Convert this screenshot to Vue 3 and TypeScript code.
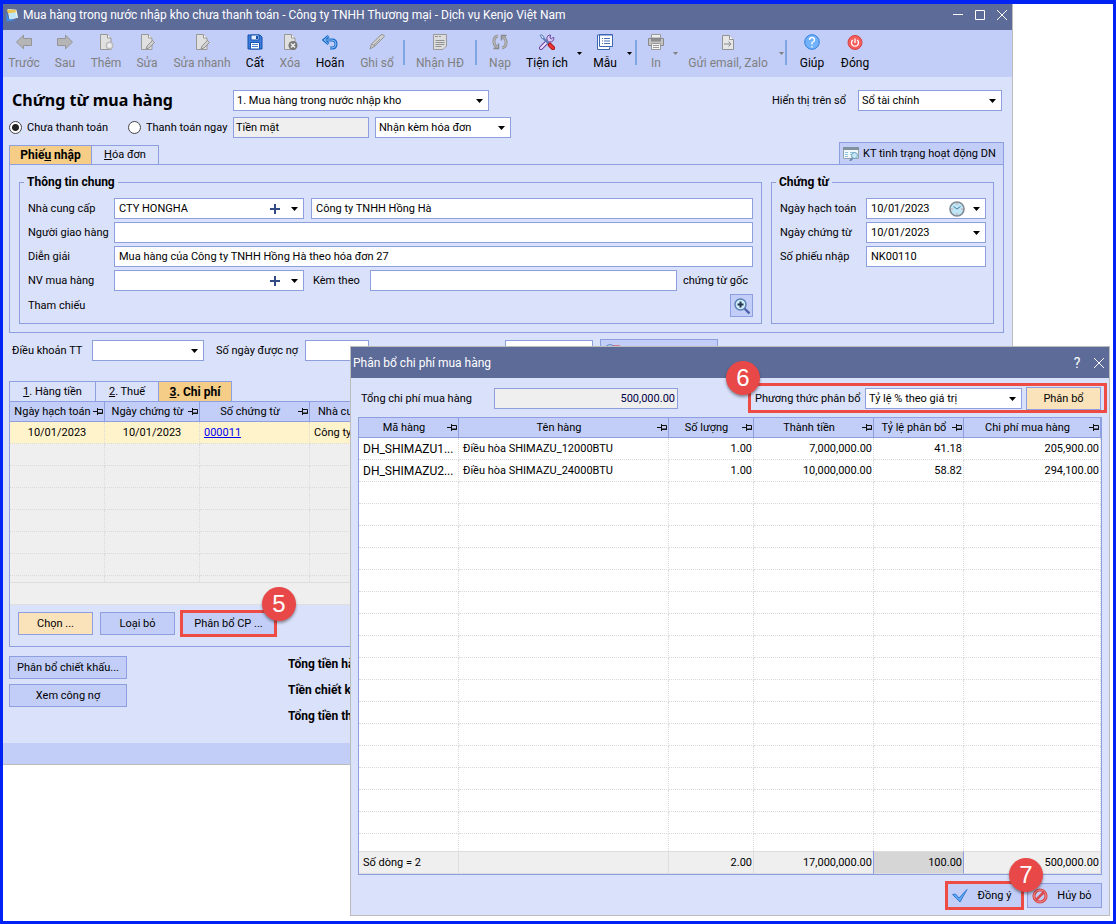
<script setup lang="ts">
import { ref } from 'vue'

interface Tool {
  kind: 'button' | 'arrow' | 'sep'
  width: number
  label?: string
  icon?: string
  off?: boolean
}

const tools: Tool[] = [
  { kind: 'button', label: 'Trước', icon: 'back', width: 42, off: true },
  { kind: 'button', label: 'Sau', icon: 'next', width: 40, off: true },
  { kind: 'button', label: 'Thêm', icon: 'add', width: 42, off: true },
  { kind: 'button', label: 'Sửa', icon: 'edit', width: 40, off: true },
  { kind: 'button', label: 'Sửa nhanh', icon: 'edit', width: 70, off: true },
  { kind: 'button', label: 'Cất', icon: 'save', width: 36 },
  { kind: 'button', label: 'Xóa', icon: 'delete', width: 34, off: true },
  { kind: 'button', label: 'Hoãn', icon: 'undo', width: 46 },
  { kind: 'button', label: 'Ghi sổ', icon: 'pen', width: 48, off: true },
  { kind: 'sep', width: 6 },
  { kind: 'button', label: 'Nhận HĐ', icon: 'invoice', width: 66, off: true },
  { kind: 'sep', width: 6 },
  { kind: 'button', label: 'Nạp', icon: 'reload', width: 42, off: true },
  { kind: 'button', label: 'Tiện ích', icon: 'tools', width: 52 },
  { kind: 'arrow', label: 'Mở Tiện ích', width: 12 },
  { kind: 'button', label: 'Mẫu', icon: 'template', width: 40 },
  { kind: 'arrow', label: 'Mở Mẫu', width: 8 },
  { kind: 'sep', width: 6 },
  { kind: 'button', label: 'In', icon: 'print', width: 34, off: true },
  { kind: 'arrow', label: 'Mở In', width: 4, off: true },
  { kind: 'button', label: 'Gửi email, Zalo', icon: 'send', width: 102, off: true },
  { kind: 'arrow', label: 'Mở Gửi email', width: 4, off: true },
  { kind: 'sep', width: 6 },
  { kind: 'button', label: 'Giúp', icon: 'help', width: 46 },
  { kind: 'button', label: 'Đóng', icon: 'power', width: 40 },
]

const payment = ref('unpaid')

const columns = ['Mã hàng', 'Tên hàng', 'Số lượng', 'Thành tiền', 'Tỷ lệ phân bổ', 'Chi phí mua hàng']
const items = [
  ['DH_SHIMAZU1...', 'Điều hòa SHIMAZU_12000BTU', '1.00', '7,000,000.00', '41.18', '205,900.00'],
  ['DH_SHIMAZU2...', 'Điều hòa SHIMAZU_24000BTU', '1.00', '10,000,000.00', '58.82', '294,100.00'],
]
const totals = ['Số dòng = 2', '', '2.00', '17,000,000.00', '100.00', '500,000.00']
</script>

<template>
  <div class="desktop">
    <svg class="defs" aria-hidden="true">
      <symbol id="back" viewBox="0 0 16 16"><path d="M.5 8 7.500 1.200v3.300h8v7h-8v3.300z" fill="#b5b5b5" stroke="#959595" /></symbol>
      <symbol id="next" viewBox="0 0 16 16"><path d="M15.500 8 8.500 1.200v3.300h-8v7h8v3.300z" fill="#b5b5b5" stroke="#959595" /></symbol>
      <symbol id="doc" viewBox="0 0 16 16"><path d="M2.500.5h7l3.500 3.500v11.500H2.500z" fill="#e0e0e0" stroke="#999" /><path d="M9.500.5V4H13" fill="#fff" stroke="#999" /></symbol>
      <symbol id="add" viewBox="0 0 16 16"><use href="#doc" /><circle cx="11.500" cy="11.500" r="3.500" fill="#ddd" stroke="#b0b0b0" /><circle cx="11.500" cy="11.500" r="1.500" fill="#f4f4f4" /></symbol>
      <symbol id="edit" viewBox="0 0 16 16"><use href="#doc" /><path d="m7 15 1-3 5.500-5.500 2 2L10 14z" fill="#d0d0d0" stroke="#929292" /></symbol>
      <symbol id="save" viewBox="0 0 16 16"><path d="M1 1h12l2 2v12H1z" fill="#3b7ddd" stroke="#1551ad" /><path d="M4 1h8v5H4z" fill="#e8f1fd" stroke="#1551ad" /><path d="M9 2h2v3H9z" fill="#1551ad" /><path d="M3.500 8.500h9V15h-9z" fill="#fff" stroke="#1551ad" /><path d="M5 10.500h6M5 12.500h6" stroke="#4a83cf" /></symbol>
      <symbol id="delete" viewBox="0 0 16 16"><use href="#doc" /><circle cx="11" cy="11.500" r="4.500" fill="#777" /><path d="m9 9.500 4 4m0-4-4 4" stroke="#eee" stroke-width="1.500" /></symbol>
      <symbol id="undo" viewBox="0 0 16 16"><path d="M6.500 2 2 6l4.500 4M2.500 6H10q4 0 4 4t-4 4H8" fill="none" stroke="#176ccb" stroke-width="3" /><path d="M6.500 2 2 6l4.500 4M3 6h7q4 0 4 4t-4 4H8" fill="none" stroke="#8dbcf2" /></symbol>
      <symbol id="pen" viewBox="0 0 16 16"><path d="m1 15 1.500-5L12 .8q2.500-1 3.500 1.500L6 12z" fill="#d0d0d0" stroke="#929292" /><path d="m2.500 10 3.500 2M5 11l6-6" stroke="#999" /></symbol>
      <symbol id="invoice" viewBox="0 0 16 16"><path d="M1.500.5h13V12l-3.500 3.500H1.500z" fill="#ddd" stroke="#999" /><path d="M3 2.500h3m1 0h2M3.500 6.500h9M3.500 8.500h9M3.500 10.500h9M3.500 12.500h6" stroke="#929292" /></symbol>
      <symbol id="reload" viewBox="0 0 16 16"><path d="M6 2Q1.500 3 2 8q0 3 3 5.500M10 14q4.500-1 4-6 0-3-3-5.500" fill="none" stroke="#969696" stroke-width="3" /><path d="M6 2Q1.500 3 2 8q0 3 3 5.500M10 14q4.500-1 4-6 0-3-3-5.500" fill="none" stroke="#c2c2c2" /><path d="M1.500 14.500h5v-5M14.500 1.500h-5v5" fill="none" stroke="#888" stroke-width="1.500" /></symbol>
      <symbol id="tools" viewBox="0 0 16 16"><path d="m2 14 8-8" stroke="#6d43a0" stroke-width="4" stroke-linecap="round" /><path d="m2 14 8-8" stroke="#efe4fb" stroke-width="2" stroke-linecap="round" /><path d="M14.500 3a3.500 3.500 0 1 1-3-2L11 4l1.500 1z" fill="#d9cbf1" stroke="#6d43a0" /><path d="m3 3 7 7" stroke="#5a7db8" stroke-width="2" /><path d="M1 1.500 3 .7l2 2.800L3.500 5z" fill="#cfe0f5" stroke="#5a7db8" /><path d="m11 11 3 3" stroke="#a51919" stroke-width="4.500" stroke-linecap="round" /><path d="m11 11 3 3" stroke="#ee3535" stroke-width="2.500" stroke-linecap="round" /></symbol>
      <symbol id="template" viewBox="0 0 16 16"><path d="M.5 2.500v13h12v-2M13.500 1H.5v3" fill="#fff" stroke="#3a66b5" /><path d="M2.500.5h13v12h-13z" fill="#fff" stroke="#3a66b5" /><path d="M2.500 1h13" stroke="#3a66b5" /><path d="M5 4.500h1m1 0h6M5 7h1m1 0h6M5 9.500h1m1 0h6" stroke="#4a73bd" /></symbol>
      <symbol id="print" viewBox="0 0 16 16"><path d="M3.500.5h9V4h-9z" fill="#f0f0f0" stroke="#999" /><path d="M.5 4.500h15v7H.5z" fill="#c4c4c4" stroke="#8a8a8a" /><path d="M3 5h10v2.500H3z" fill="#8d8d8d" /><path d="M3.500 9.500h9v6h-9z" fill="#f4f4f4" stroke="#999" /><path d="M5 11.500h6m-6 2h6" stroke="#999" /></symbol>
      <symbol id="send" viewBox="0 0 16 16"><path d="M2.500 1.500h7l4 4v10h-11z" fill="#e6e6e6" stroke="#929292" /><path d="M9.500 1.500v4h4" fill="#fff" stroke="#929292" /><path d="M4 10h7M8.500 7.500 11 10l-2.500 2.500" fill="none" stroke="#888" /></symbol>
      <symbol id="help" viewBox="0 0 16 16"><circle cx="8" cy="8" r="7.300" fill="#72b2fa" stroke="#2e80df" /><path d="M5.500 6q0-2.500 2.500-2.500T10.500 6Q10.500 7.500 8 8.500v2M8 12v1.500" fill="none" stroke="#fff" stroke-width="1.300" /></symbol>
      <symbol id="power" viewBox="0 0 16 16"><circle cx="8" cy="8.500" r="7" fill="#f4605e" stroke="#d63f42" /><path d="M5.800 6a3.500 3.500 0 1 0 4.400 0M8 4.500V9" fill="none" stroke="#fff" stroke-width="1.300" /></symbol>
      <symbol id="notes" viewBox="0 0 16 16"><path d="m3 1 10 1 2 9-10 2z" fill="#f4f7e6" /><path d="m2 2 10 0 .5 3-9 1z" fill="#e8c454" /><path d="m1 4 3 8 8 2-10 1z" fill="#3c8df0" /><path d="m4 6 8-1 2 6-8 2z" fill="#bfe4f6" /></symbol>
      <symbol id="arrow" viewBox="0 0 7 4"><path d="M0 0h7L3.500 4z" fill="currentColor" /></symbol>
      <symbol id="plus" viewBox="0 0 10 10"><path d="M5 0v10M0 5h10" stroke="#324a86" stroke-width="2" /></symbol>
      <symbol id="pin" viewBox="0 0 10 7"><path d="M0 3.500h4M4.500 0v7M4.500 1.500h5v4h-5" fill="none" stroke="#111" /><path d="M5 5h5" stroke="#111" /></symbol>
      <symbol id="clock" viewBox="0 0 16 16"><circle cx="8" cy="8" r="7" fill="#bfe6f5" stroke="#7f8a94" stroke-width="1.600" /><path d="M8 8 4.500 5.500M8 8l3.500-2.500" stroke="#4779a6" /><path d="M7.500 2.500h1v1h-1zM7.500 12.500h1v1h-1zM2.500 7.500h1v1h-1zM12.500 7.500h1v1h-1z" fill="#e05a5a" /></symbol>
      <symbol id="zoom" viewBox="0 0 16 16"><path d="m10.500 10.500 5 5" stroke="#4c62ab" stroke-width="2.400" /><circle cx="6.500" cy="6.500" r="5.500" fill="#cfeefa" stroke="#5b7bb4" stroke-width="1.400" /><path d="M6.500 3.500v6M3.500 6.500h6" stroke="#26344f" stroke-width="2" /></symbol>
      <symbol id="lookup" viewBox="0 0 16 14"><path d="M.5.5h15v11H.5z" fill="#f1f8fa" stroke="#94a5ae" /><path d="M0 0h16v3H0z" fill="#80929d" /><path d="M2 5.500h3m-3 2h3m-3 2h3M7 5.500h5m-5 2h3" stroke="#8fc4dc" /><circle cx="11.500" cy="8.500" r="3" fill="#c4e6f5" stroke="#6f9fc0" /><path d="m9.500 11-2.500 3" stroke="#6f8ea8" stroke-width="2" /></symbol>
      <symbol id="report" viewBox="0 0 16 14"><circle cx="6" cy="6" r="5.300" fill="#cfeefa" stroke="#5b7bb4" /><path d="M9 2.500h7" stroke="#d33" stroke-width="2" /></symbol>
      <symbol id="ok" viewBox="0 0 16 16"><path d="m.5 6.500 3-.5 3.500 4 8-8.500L8 14z" fill="#5ea8f5" stroke="#3479cf" stroke-linejoin="round" /></symbol>
      <symbol id="deny" viewBox="0 0 16 16"><circle cx="8" cy="8" r="6" fill="none" stroke="#d94a4e" stroke-width="3.200" /><circle cx="8" cy="8" r="6" fill="none" stroke="#f4908f" /><path d="m4 12 8-8" stroke="#d94a4e" stroke-width="2.500" /></symbol>
    </svg>

    <!-- Purchase voucher window -->
    <section class="window voucher" aria-label="Chứng từ mua hàng">
      <header class="titlebar">
        <svg class="app"><use href="#notes" /></svg>
        <span class="caption">Mua hàng trong nước nhập kho chưa thanh toán - Công ty TNHH Thương mại - Dịch vụ Kenjo Việt Nam</span>
        <button type="button" aria-label="Thu nhỏ"><svg viewBox="0 0 10 10"><path d="M0 4.500h10" /></svg></button>
        <button type="button" aria-label="Phóng to"><svg viewBox="0 0 10 10"><path d="M.5.5h9v9h-9z" /></svg></button>
        <button type="button" aria-label="Đóng cửa sổ"><svg viewBox="0 0 10 10"><path d="m0 0 10 10M10 0 0 10" /></svg></button>
      </header>

      <nav class="toolbar" aria-label="Công cụ">
        <template v-for="(t, i) in tools" :key="i">
          <span v-if="t.kind === 'sep'" class="sep" :style="{ width: t.width + 'px' }"></span>
          <button v-else-if="t.kind === 'arrow'" type="button" class="more" :disabled="t.off" :aria-label="t.label" :style="{ width: t.width + 'px' }">
            <svg class="tri small"><use href="#arrow" /></svg>
          </button>
          <button v-else type="button" class="tool" :disabled="t.off" :style="{ width: t.width + 'px' }">
            <svg class="icon"><use :href="'#' + t.icon" /></svg>
            <span>{{ t.label }}</span>
          </button>
        </template>
      </nav>

      <div class="content">
        <div class="line first">
          <h1>Chứng từ mua hàng</h1>
          <span class="combo kind">
            <select aria-label="Loại chứng từ"><option>1. Mua hàng trong nước nhập kho</option></select>
            <svg class="tri"><use href="#arrow" /></svg>
          </span>
          <label class="book" for="book">Hiển thị trên sổ</label>
          <span class="combo ledger">
            <select id="book"><option>Sổ tài chính</option></select>
            <svg class="tri"><use href="#arrow" /></svg>
          </span>
        </div>

        <div class="line second">
          <label class="radio"><input v-model="payment" type="radio" name="pay" value="unpaid" />Chưa thanh toán</label>
          <label class="radio later"><input v-model="payment" type="radio" name="pay" value="now" />Thanh toán ngay</label>
          <input class="box cash" value="Tiền mặt" readonly aria-label="Hình thức thanh toán" />
          <span class="combo invoice">
            <select aria-label="Hóa đơn"><option>Nhận kèm hóa đơn</option></select>
            <svg class="tri"><use href="#arrow" /></svg>
          </span>
        </div>

        <div class="tabs upper">
          <button type="button" class="tab receipt on">Phiế<u>u</u> nhập</button>
          <button type="button" class="tab bill"><u>H</u>óa đơn</button>
          <button type="button" class="btn status"><svg class="look"><use href="#lookup" /></svg>KT tình trạng hoạt động DN</button>
        </div>

        <div class="panel general">
          <fieldset class="info">
            <legend>Thông tin chung</legend>
            <div class="row">
              <label for="vendor">Nhà cung cấp</label>
              <span class="combo vendor">
                <input id="vendor" value="CTY HONGHA" />
                <svg class="plus"><use href="#plus" /></svg>
                <svg class="tri"><use href="#arrow" /></svg>
              </span>
              <input class="box grow after" value="Công ty TNHH Hồng Hà" aria-label="Tên nhà cung cấp" />
            </div>
            <div class="row">
              <label for="shipper">Người giao hàng</label>
              <input id="shipper" class="box grow" />
            </div>
            <div class="row">
              <label for="note">Diễn giải</label>
              <input id="note" class="box grow" value="Mua hàng của Công ty TNHH Hồng Hà theo hóa đơn 27" />
            </div>
            <div class="row">
              <label for="buyer">NV mua hàng</label>
              <span class="combo vendor">
                <input id="buyer" />
                <svg class="plus"><use href="#plus" /></svg>
                <svg class="tri"><use href="#arrow" /></svg>
              </span>
              <label class="attach" for="attach">Kèm theo</label>
              <input id="attach" class="box grow" />
              <span class="origin">chứng từ gốc</span>
            </div>
            <div class="row">
              <span class="grow">Tham chiếu</span>
              <button type="button" class="btn search" aria-label="Tìm chứng từ"><svg class="icon"><use href="#zoom" /></svg></button>
            </div>
          </fieldset>

          <fieldset class="voucher-info">
            <legend>Chứng từ</legend>
            <div class="row">
              <label for="posted">Ngày hạch toán</label>
              <span class="combo grow">
                <input id="posted" value="10/01/2023" />
                <svg class="clock"><use href="#clock" /></svg>
                <svg class="tri"><use href="#arrow" /></svg>
              </span>
            </div>
            <div class="row">
              <label for="dated">Ngày chứng từ</label>
              <span class="combo grow">
                <input id="dated" value="10/01/2023" />
                <svg class="tri"><use href="#arrow" /></svg>
              </span>
            </div>
            <div class="row">
              <label for="number">Số phiếu nhập</label>
              <input id="number" class="box grow" value="NK00110" />
            </div>
          </fieldset>
        </div>

        <div class="line terms">
          <label for="term">Điều khoản TT</label>
          <span class="combo term">
            <select id="term"><option></option></select>
            <svg class="tri"><use href="#arrow" /></svg>
          </span>
          <label class="days-label" for="days">Số ngày được nợ</label>
          <input id="days" class="box days" />
          <input class="box due" aria-label="Hạn thanh toán" />
          <button type="button" class="btn debt" aria-label="Xem công nợ"><svg class="look"><use href="#report" /></svg></button>
        </div>

        <div class="tabs lower">
          <button type="button" class="tab goods"><u>1</u>. Hàng tiền</button>
          <button type="button" class="tab tax"><u>2</u>. Thuế</button>
          <button type="button" class="tab cost on"><u>3</u>. Chi phí</button>
        </div>

        <div class="panel costs">
          <table class="grid muted">
            <colgroup><col class="w95" /><col class="w95" /><col class="w110" /><col /></colgroup>
            <thead>
              <tr>
                <th><div><span>Ngày hạch toán</span><svg class="pin"><use href="#pin" /></svg></div></th>
                <th><div><span>Ngày chứng từ</span><svg class="pin"><use href="#pin" /></svg></div></th>
                <th><div><span>Số chứng từ</span><svg class="pin"><use href="#pin" /></svg></div></th>
                <th class="vendor-head">Nhà cung cấp</th>
              </tr>
            </thead>
            <tbody>
              <tr class="picked">
                <td class="mid">10/01/2023</td>
                <td class="mid">10/01/2023</td>
                <td><a href="#">000011</a></td>
                <td>Công ty TNHH Hồng Hà</td>
              </tr>
              <tr v-for="n in 6" :key="n"><td v-for="c in 4" :key="c"></td></tr>
              <tr class="cut"><td v-for="c in 4" :key="c"></td></tr>
            </tbody>
            <tfoot><tr><td colspan="4"></td></tr></tfoot>
          </table>
          <div class="actions">
            <button type="button" class="btn b75 warm">Chọn ...</button>
            <button type="button" class="btn b75">Loại bỏ</button>
            <span class="marked split">
              <button type="button" class="btn">Phân bổ CP ...</button>
              <span class="ring"><b class="badge">5</b></span>
            </span>
          </div>
        </div>

        <div class="bottom">
          <div class="stack">
            <button type="button" class="btn">Phân bổ chiết khấu...</button>
            <button type="button" class="btn">Xem công nợ</button>
          </div>
          <div class="sums">
            <span>Tổng tiền hàng</span>
            <span>Tiền chiết khấu</span>
            <span>Tổng tiền thanh toán</span>
          </div>
        </div>
      </div>
      <footer class="statusbar"></footer>
    </section>

    <!-- Cost allocation dialog -->
    <section class="window dialog" role="dialog" aria-label="Phân bổ chi phí mua hàng">
      <header class="titlebar">
        <span class="caption">Phân bổ chi phí mua hàng</span>
        <button type="button" class="question" aria-label="Trợ giúp">?</button>
        <button type="button" aria-label="Đóng hộp thoại"><svg viewBox="0 0 10 10"><path d="m0 0 10 10M10 0 0 10" /></svg></button>
      </header>
      <div class="dialog-body">
        <div class="line filter">
          <label for="total">Tổng chi phí mua hàng</label>
          <input id="total" class="box total" value="500,000.00" readonly />
          <div class="marked method">
            <label for="method">Phương thức phân bổ</label>
            <span class="combo">
              <select id="method"><option>Tỷ lệ % theo giá trị</option></select>
              <svg class="tri"><use href="#arrow" /></svg>
            </span>
            <button type="button" class="btn b75 warm">Phân bổ</button>
            <span class="ring"><b class="badge">6</b></span>
          </div>
        </div>

        <div class="frame">
          <table class="grid">
            <colgroup><col class="w100" /><col /><col class="w85" /><col class="w120" /><col class="w90" /><col class="w137" /></colgroup>
            <thead>
              <tr>
                <th v-for="c in columns" :key="c"><div><span>{{ c }}</span><svg class="pin"><use href="#pin" /></svg></div></th>
              </tr>
            </thead>
            <tbody>
              <tr v-for="item in items" :key="item[0]">
                <td v-for="(v, i) in item" :key="i" :class="{ num: i > 1, code: i === 0 }">{{ v }}</td>
              </tr>
              <tr v-for="n in 16" :key="n"><td v-for="c in 6" :key="c"></td></tr>
              <tr class="rest"><td v-for="c in 6" :key="c"></td></tr>
            </tbody>
            <tfoot>
              <tr>
                <td v-for="(v, i) in totals" :key="i" :class="{ num: i > 1, focus: i === 4 }">{{ v }}</td>
              </tr>
            </tfoot>
          </table>
        </div>

        <div class="confirm">
          <span class="marked agree">
            <button type="button" class="btn b75"><svg class="icon"><use href="#ok" /></svg><span>Đồng ý</span></button>
            <span class="ring"><b class="badge">7</b></span>
          </span>
          <button type="button" class="btn b75"><svg class="icon"><use href="#deny" /></svg><span>Hủy bỏ</span></button>
        </div>
      </div>
    </section>
  </div>
</template>

<style>
html,
body {
  background: #fff;
}
</style>

<style scoped>
.desktop {
  --line: #8e9fe0;
  --face: #c2cef8;
  --paper: #dae1fb;
  --warm: #fae3bb;
  box-sizing: border-box;
  display: grid;
  align-items: start;
  min-height: 100vh;
  border: 3px solid #0023f5;
  border-top-width: 4px;
  background: #fff;
  color: #000;
  font: 12px/16px Roboto, 'Liberation Sans', sans-serif;
}
.desktop *,
.desktop *::before {
  box-sizing: border-box;
}
.defs {
  position: absolute;
  width: 0;
  height: 0;
}
button,
input,
select {
  margin: 0;
  padding: 0;
  border: 0;
  border-radius: 0;
  background: none;
  color: inherit;
  font: inherit;
  appearance: none;
  outline: none;
}
svg {
  display: block;
  flex: none;
}
label,
span,
button {
  white-space: nowrap;
}
.window {
  grid-area: 1 / 1;
  min-width: 0;
  background: var(--paper);
}
.voucher {
  margin-right: 100px;
  border: solid #bcbcbc;
  border-width: 0 1px 1px 0;
}
.dialog {
  z-index: 1;
  margin: 342px 3px 4px 347px;
  border: 1px solid #bcbcbc;
}

.titlebar {
  display: flex;
  align-items: center;
  gap: 12px;
  height: 26px;
  padding: 0 5px 4px 2px;
  background: #5d6b99;
  color: #fff;
}
.dialog .titlebar {
  height: 31px;
  padding-bottom: 0;
}
.titlebar .app {
  width: 14px;
  height: 14px;
  margin-right: -8px;
}
.caption {
  flex: 1;
  min-width: 0;
  overflow: hidden;
}
.titlebar button {
  width: 10px;
  height: 16px;
  display: grid;
  place-items: center;
}
.titlebar button svg {
  width: 10px;
  height: 10px;
  fill: none;
  stroke: #fff;
  overflow: visible;
}
.titlebar .question {
  font-size: 14px;
}

.toolbar {
  display: flex;
  height: 47px;
  padding-top: 4px;
  background: var(--face);
}
.tool {
  display: flex;
  flex-direction: column;
  align-items: center;
  gap: 5px;
}
.tool:disabled,
.more:disabled {
  color: #808080;
}
.icon {
  width: 16px;
  height: 16px;
}
.more {
  display: grid;
  place-items: center;
  height: 38px;
}
.sep::before {
  content: '';
  display: block;
  width: 2px;
  height: 25px;
  margin: 6px auto 0;
  background: #7ea6e0;
}
.tri {
  width: 7px;
  height: 4px;
}
.tri.small {
  width: 5px;
  height: 3px;
}

.content {
  padding: 13px 8px 0 6px;
  font-size: 11px;
}
.line,
.row {
  display: flex;
  align-items: center;
}
.first {
  height: 21px;
}
h1 {
  width: 221px;
  margin: 0 0 0 3px;
  font: bold 16px/21px 'Noto Sans', sans-serif;
  white-space: nowrap;
}
.combo {
  display: grid;
  grid-template-columns: minmax(0, 1fr) auto auto;
  align-items: center;
  column-gap: 8px;
  height: 21px;
  padding-right: 5px;
  border: 1px solid var(--line);
  background: #fff;
}
.combo select,
.combo input {
  grid-row: 1;
  height: 19px;
  padding: 0 3px;
  min-width: 0;
}
.combo select {
  grid-column: 1 / -1;
}
.combo input {
  padding-left: 4px;
  grid-column: 1;
}
.combo .tri {
  grid-row: 1;
  grid-column: 3;
  pointer-events: none;
}
.plus {
  width: 10px;
  height: 10px;
  margin-right: 3px;
}
.clock {
  width: 16px;
  height: 16px;
}
.kind {
  width: 256px;
}
.book {
  margin-left: auto;
}
.ledger {
  width: 144px;
  margin: 0 2px 0 12px;
}
.second {
  margin-top: 6px;
}
.radio {
  display: flex;
  align-items: center;
  gap: 5px;
  width: 119px;
}
.radio.later {
  width: 105px;
}
.radio input {
  width: 13px;
  height: 13px;
  border: 1px solid #444;
  border-radius: 50%;
  background: #fff;
}
.radio input:checked {
  background: radial-gradient(circle, #222 0 3px, #fff 4px);
}
.box {
  min-width: 0;
  height: 21px;
  padding: 0 4px;
  border: 1px solid var(--line);
  background: #fff;
}
.box:read-only {
  background: #efefef;
}
.cash {
  width: 136px;
  padding-left: 2px;
}
.invoice {
  width: 136px;
  margin-left: 6px;
}

.tabs {
  display: flex;
  align-items: flex-end;
}
.upper {
  height: 22px;
  margin-top: 4px;
}
.tab {
  height: 19px;
  border: 1px solid var(--line);
  border-bottom: 0;
}
.tab + .tab {
  border-left: 0;
}
.tab.on {
  background: #f6cd86;
  font-size: 12px;
  font-weight: bold;
}
.receipt {
  width: 83px;
}
.bill {
  width: 67px;
}
.btn {
  display: flex;
  align-items: center;
  justify-content: center;
  height: 23px;
  border: 1px solid var(--line);
  background: var(--face);
}
.btn.warm {
  background: var(--warm);
}
.b75 {
  width: 75px;
}
.status {
  width: 165px;
  height: 22px;
  margin-left: auto;
  padding-left: 3px;
  gap: 4px;
  justify-content: flex-start;
  border-bottom: 0;
}
.look {
  width: 16px;
  height: 14px;
}
.panel {
  border: 1px solid var(--line);
}
.general {
  display: flex;
  gap: 9px;
  padding: 9px 9px 8px;
}
fieldset {
  min-width: 0;
  margin: 0;
  padding: 8px 8px 6px 4px;
  border: 1px solid var(--line);
}
legend {
  padding: 0 3px;
  font-size: 12px;
  font-weight: bold;
}
.info {
  flex: 1;
}
.voucher-info {
  width: 223px;
  padding-right: 7px;
}
.row {
  margin-bottom: 3px;
  padding-left: 4px;
}
.row:last-child {
  margin-bottom: 0;
}
.row > label:first-child {
  width: 86px;
}
.grow {
  flex: 1;
}
.vendor {
  width: 190px;
}
.after {
  margin-left: 7px;
}
.attach {
  width: 66px;
  padding-left: 9px;
}
.origin {
  width: 76px;
  padding-left: 6px;
}
.search {
  width: 23px;
}

.terms {
  margin-top: 7px;
  height: 21px;
  padding-left: 3px;
}
.terms > label:first-child {
  width: 80px;
}
.term {
  width: 112px;
}
.days-label {
  width: 101px;
  padding-left: 12px;
}
.days {
  width: 64px;
}
.due {
  width: 88px;
  margin-left: 136px;
}
.debt {
  width: 118px;
  margin-left: 7px;
  padding-left: 3px;
  justify-content: flex-start;
}
.lower {
  margin-top: 20px;
}
.lower .tab {
  height: 20px;
}
.goods {
  width: 87px;
}
.tax {
  width: 63px;
}
.cost {
  width: 73px;
}

.grid {
  width: 100%;
  table-layout: fixed;
  border-collapse: separate;
  border-spacing: 0;
}
.w85 {
  width: 85px;
}
.w90 {
  width: 90px;
}
.w95 {
  width: 95px;
}
.w100 {
  width: 100px;
}
.w110 {
  width: 110px;
}
.w120 {
  width: 120px;
}
.w137 {
  width: 137px;
}
.grid th {
  height: 20px;
  padding: 0 1px 0 2px;
  border: solid var(--line);
  border-width: 0 1px 1px 0;
  background: var(--face);
  font-weight: normal;
}
.grid th div {
  display: flex;
  align-items: center;
}
.grid th span {
  flex: 1;
}
.grid th.vendor-head {
  padding-left: 8px;
  text-align: left;
}
.pin {
  width: 10px;
  height: 7px;
}
.grid td {
  height: 22px;
  padding: 0 4px;
  border: dotted #dadada;
  border-width: 0 1px 1px 0;
  background: #fff;
  overflow: hidden;
  white-space: nowrap;
}
.grid .code {
  font-size: 12px;
}
.grid .num {
  padding-right: 1px;
  text-align: right;
}
.muted td {
  background: #efefef;
}
.muted .picked td {
  background: #fff3cc;
}
.muted .mid {
  text-align: center;
}
.muted td a {
  color: #0000f0;
}
.grid .cut td {
  height: 6px;
  border-bottom: 0;
}
.grid .rest td {
  height: 17px;
  border-bottom: 0;
}
.grid tfoot td {
  height: 23px;
  border: solid #dedede;
  border-width: 1px 1px 1px 0;
  background: #efefef;
}
.grid tfoot .focus {
  background: #d6d6d6;
  box-shadow: -1px 0 var(--line);
  border-right-color: var(--line);
}
.actions {
  display: flex;
  gap: 7px;
  padding: 7px 8px 11px;
}

.marked {
  position: relative;
  display: flex;
  align-items: center;
}
.split .btn {
  width: 93px;
}
.ring {
  position: absolute;
  inset: -2px;
  border: 3px solid #ee4b45;
  pointer-events: none;
}
.badge {
  position: absolute;
  top: -26px;
  right: -22px;
  display: grid;
  place-items: center;
  width: 34px;
  height: 34px;
  border-radius: 50%;
  background: #e94848;
  box-shadow: 0 2px 3px #0006;
  color: #fff;
  font: 24px/34px 'Liberation Sans', sans-serif;
}

.bottom {
  display: flex;
  gap: 161px;
  padding: 9px 0 19px;
}
.stack {
  display: flex;
  flex-direction: column;
  gap: 5px;
  width: 118px;
}
.sums {
  display: flex;
  flex-direction: column;
  gap: 10px;
  font-size: 12px;
  font-weight: bold;
}
.statusbar {
  height: 21px;
  background: var(--face);
}

.dialog-body {
  padding: 9px 7px 7px;
  font-size: 11px;
}
.filter {
  padding-left: 3px;
}
.filter > label {
  width: 133px;
}
.total {
  width: 184px;
  padding-right: 2px;
  color: #000048;
  text-align: right;
}
.method {
  margin: 0 1px 0 auto;
}
.method label {
  width: 110px;
}
.method .combo {
  width: 157px;
  margin-right: 4px;
}
.method .ring {
  inset: -4px -6px -3px -7px;
}
.method .badge {
  top: -25px;
  right: auto;
  left: -25px;
}
.frame {
  margin-top: 7px;
  border: 1px solid var(--line);
}
.confirm {
  display: flex;
  justify-content: flex-end;
  gap: 5px;
  margin-top: 8px;
}
.confirm .btn {
  height: 25px;
  justify-content: flex-start;
  padding-left: 4px;
}
.confirm .btn span {
  flex: 1;
  text-align: center;
}
.agree {
  z-index: 1;
}
</style>
